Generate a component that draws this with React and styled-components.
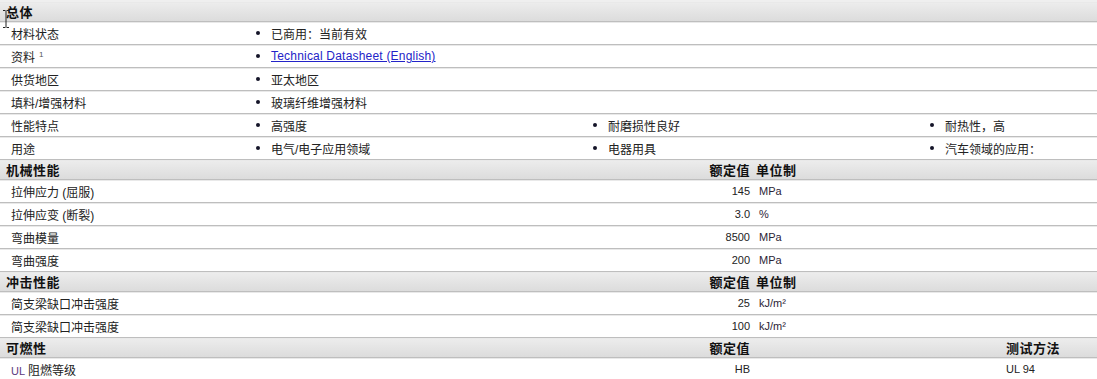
import React from 'react';
import styled, { createGlobalStyle } from 'styled-components';

const GlobalStyle = createGlobalStyle`
  html, body {
    margin: 0;
    padding: 0;
    background: #fff;
  }
  body {
    font-family: "Liberation Sans", "Noto Sans CJK SC", sans-serif;
    font-size: 12px;
    color: #222;
  }
`;

const Sheet = styled.div`
  position: relative;
  border-top: 2px solid #efefef;
`;

const BaseRow = styled.div`
  display: grid;
  grid-template-columns: ${p => p.$cols};
  align-items: center;
  border-bottom: 1px solid #bebebe;
  box-shadow: inset 0 1px 0 #e9e9e9;
  white-space: nowrap;
`;

const HeadRow = styled(BaseRow)`
  height: 19px;
  background: linear-gradient(#ededed, #dcdcdc);
  font-weight: bold;
  font-size: 13px;
  letter-spacing: 0.5px;
  color: #111;
`;

const DataRow = styled(BaseRow)`
  height: 22px;
  background: #fff;
`;

const HeadLabel = styled.div`
  padding-left: 6px;
`;

const Label = styled.div`
  padding-left: 11px;
`;

const Sup = styled.sup`
  font-size: 8px;
  color: #555;
  margin-left: 4px;
  vertical-align: 5px;
`;

const Item = styled.div`
  display: flex;
  align-items: center;
  padding-left: 4px;
`;

const Bullet = styled.span`
  width: 4px;
  height: 4px;
  border-radius: 50%;
  background: #141428;
  margin-right: 11px;
  flex: none;
`;

const DocLink = styled.a`
  color: #2323c8;
  text-decoration: underline;
  letter-spacing: 0.2px;
`;

const Value = styled.div`
  text-align: right;
  font-size: ${p => (p.$head ? 13 : 11)}px;
`;

const Unit = styled.div`
  padding-left: ${p => (p.$head ? 6 : 9)}px;
  font-size: ${p => (p.$head ? 13 : 11)}px;
  color: ${p => (p.$head ? '#111' : '#2c2436')};
`;

const Test = styled.div`
  padding-left: 6px;
  font-size: ${p => (p.$head ? 13 : 11)}px;
`;

const Tag = styled.span`
  color: #5b3a80;
  font-size: 11px;
  margin-right: 3px;
`;

const Cursor = styled.svg`
  position: absolute;
  left: 2px;
  top: 8px;
`;

const GENERAL_COLS = '252px 337px 337px 1fr';
const PROP_COLS = '1fr 81px 250px 97px';

const general = [
  { label: '材料状态', items: ['已商用：当前有效'] },
  { label: '资料', sup: '1', items: [{ link: 'Technical Datasheet (English)' }] },
  { label: '供货地区', items: ['亚太地区'] },
  { label: '填料/增强材料', items: ['玻璃纤维增强材料'] },
  { label: '性能特点', items: ['高强度', '耐磨损性良好', '耐热性，高'] },
  { label: '用途', items: ['电气/电子应用领域', '电器用具', '汽车领域的应用：'] },
];

const sections = [
  {
    title: '机械性能',
    unitHead: '单位制',
    rows: [
      { label: '拉伸应力 (屈服)', value: '145', unit: 'MPa' },
      { label: '拉伸应变 (断裂)', value: '3.0', unit: '%' },
      { label: '弯曲模量', value: '8500', unit: 'MPa' },
      { label: '弯曲强度', value: '200', unit: 'MPa' },
    ],
  },
  {
    title: '冲击性能',
    unitHead: '单位制',
    rows: [
      { label: '简支梁缺口冲击强度', value: '25', unit: 'kJ/m²' },
      { label: '简支梁缺口冲击强度', value: '100', unit: 'kJ/m²' },
    ],
  },
  {
    title: '可燃性',
    testHead: '测试方法',
    rows: [{ tag: 'UL', label: '阻燃等级', value: 'HB', test: 'UL 94' }],
  },
];

function GeneralSection() {
  return (
    <>
      <HeadRow $cols={GENERAL_COLS}>
        <HeadLabel>总体</HeadLabel>
      </HeadRow>
      {general.map(row => (
        <DataRow key={row.label} $cols={GENERAL_COLS}>
          <Label>
            {row.label}
            {row.sup && <Sup>{row.sup}</Sup>}
          </Label>
          {row.items.map((it, i) => (
            <Item key={i}>
              <Bullet />
              {typeof it === 'string' ? it : <DocLink href="#">{it.link}</DocLink>}
            </Item>
          ))}
        </DataRow>
      ))}
    </>
  );
}

function PropSection({ section }) {
  return (
    <>
      <HeadRow $cols={PROP_COLS}>
        <HeadLabel>{section.title}</HeadLabel>
        <Value $head>额定值</Value>
        <Unit $head>{section.unitHead}</Unit>
        <Test $head>{section.testHead}</Test>
      </HeadRow>
      {section.rows.map((row, i) => (
        <DataRow key={i} $cols={PROP_COLS}>
          <Label>
            {row.tag && <Tag>{row.tag}</Tag>}
            {row.label}
          </Label>
          <Value>{row.value}</Value>
          <Unit>{row.unit}</Unit>
          <Test>{row.test}</Test>
        </DataRow>
      ))}
    </>
  );
}

export default function App() {
  return (
    <Sheet>
      <GlobalStyle />
      <GeneralSection />
      {sections.map(s => (
        <PropSection key={s.title} section={s} />
      ))}
      <Cursor width="8" height="18" viewBox="0 0 8 18">
        <path d="M1 0.5h2.5M4.5 0.5H7M4 1v16M1 17.5h2.5M4.5 17.5H7" stroke="#222" strokeWidth="1" fill="none" />
      </Cursor>
    </Sheet>
  );
}
